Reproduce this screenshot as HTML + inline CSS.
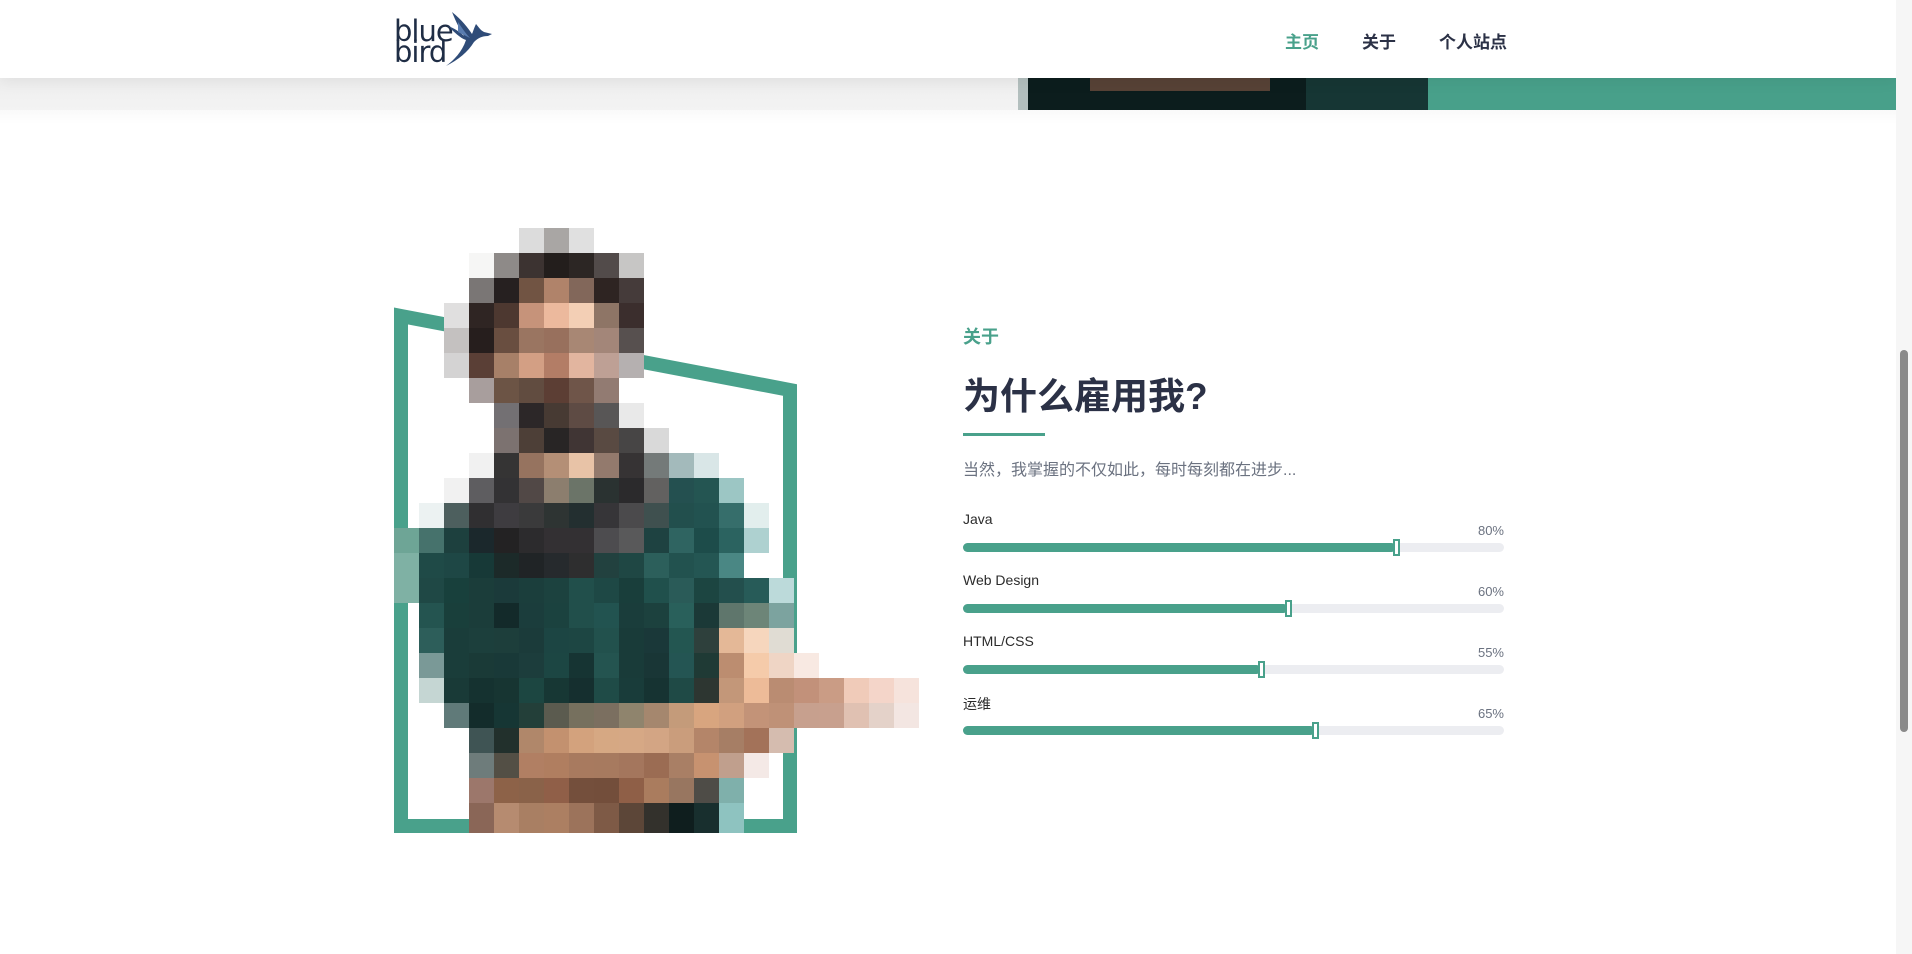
<!DOCTYPE html>
<html><head><meta charset="utf-8">
<style>
*{margin:0;padding:0;box-sizing:border-box}
html,body{width:1912px;height:954px;overflow:hidden;background:#fff;font-family:"Liberation Sans","Noto Sans CJK SC",sans-serif}
.abs{position:absolute}
.nav{font-size:17px;font-weight:600;color:#2b3146;top:28px}
.lbl{font-size:14px;color:#2b2b2b;left:963px}
.pct{font-size:13px;color:#6b7280;right:408px}
.track{left:963px;width:541px;height:9px;border-radius:5px;background:#ecedf1}
.fill{left:0;top:0;height:9px;border-radius:5px;background:#49a18b}
.h{top:-4px;width:7px;height:17px;background:#fff;border:2px solid #49a18b;margin-left:-3px}
</style></head><body>
<div class="abs" style="left:0;top:78px;width:1018px;height:32px;background:linear-gradient(#eeeeee,#f3f3f3)"></div>
<div class="abs" style="left:0;top:110px;width:1896px;height:14px;background:linear-gradient(#f9f9f9,#fff)"></div>
<div class="abs" style="left:1018px;top:78px;width:10px;height:32px;background:#b3bfbe"></div>
<div class="abs" style="left:1028px;top:78px;width:278px;height:32px;background:#0c1d1d"></div>
<div class="abs" style="left:1090px;top:78px;width:180px;height:13px;background:#574236"></div>
<div class="abs" style="left:1306px;top:78px;width:122px;height:32px;background:#163634"></div>
<div class="abs" style="left:1428px;top:78px;width:468px;height:32px;background:#48a08a"></div>
<div class="abs" style="left:0;top:0;width:1896px;height:78px;background:#fff;box-shadow:0 4px 14px rgba(0,0,0,0.06)"></div>
<div class="abs" style="left:394px;top:21px;font-size:29px;line-height:21px;color:#1f2d45;letter-spacing:-1px;font-family:'DejaVu Sans',sans-serif">blue<br>bird</div>
<svg class="abs" style="left:440px;top:8px" width="56" height="62" viewBox="0 0 56 62">
<path d="M12 4 C16 14 20 22 24 28 C20 24 14 20 8 18 C14 24 20 30 26 32 C22 44 14 52 6 58 C18 52 28 44 34 34 C38 30 42 28 48 28 L52 26 L44 24 C40 22 38 18 36 16 C34 20 33 24 32 26 C28 20 22 12 12 4Z" fill="#2f4c78"/>
<path d="M18 14 C22 20 26 26 30 30 C26 28 22 26 18 24Z" fill="#5a7db0"/>
</svg>
<div class="abs nav" style="left:1285px;color:#49a18b">主页</div>
<div class="abs nav" style="left:1362px">关于</div>
<div class="abs nav" style="left:1439px">个人站点</div>
<div class="abs" style="left:1896px;top:0;width:16px;height:954px;background:#f6f6f6"></div>
<div class="abs" style="left:1900px;top:350px;width:8px;height:382px;border-radius:4px;background:#8a8a8a"></div>
<svg class="abs" style="left:0;top:0" width="1912" height="954">
<polygon points="401,316 790,390 790,826 401,826" fill="none" stroke="#49a18b" stroke-width="14"/>
<g id="px"></g>
</svg>
<div class="abs" style="left:963px;top:323px;font-size:18px;font-weight:700;color:#49a18b">关于</div>
<div class="abs" style="left:963px;top:366px;font-size:37px;font-weight:700;color:#2b3146">为什么雇用我?</div>
<div class="abs" style="left:963px;top:433px;width:82px;height:3px;background:#49a18b"></div>
<div class="abs" style="left:963px;top:456px;font-size:16px;color:#6b7280">当然，我掌握的不仅如此，每时每刻都在进步...</div>

<div class="abs lbl" style="top:511px">Java</div>
<div class="abs pct" style="top:523px">80%</div>
<div class="abs track" style="top:543px"><div class="abs fill" style="width:80%"></div><div class="abs h" style="left:80%"></div></div>

<div class="abs lbl" style="top:572px">Web Design</div>
<div class="abs pct" style="top:584px">60%</div>
<div class="abs track" style="top:604px"><div class="abs fill" style="width:60%"></div><div class="abs h" style="left:60%"></div></div>

<div class="abs lbl" style="top:633px">HTML/CSS</div>
<div class="abs pct" style="top:645px">55%</div>
<div class="abs track" style="top:665px"><div class="abs fill" style="width:55%"></div><div class="abs h" style="left:55%"></div></div>

<div class="abs lbl" style="top:694px">运维</div>
<div class="abs pct" style="top:706px">65%</div>
<div class="abs track" style="top:726px"><div class="abs fill" style="width:65%"></div><div class="abs h" style="left:65%"></div></div>

<script>
var R=[
"5:dcdcdc,a9a6a4,e0e0e0",
"3:f6f6f5,8e8a88,3c3331,231e1c,2c2624,524b4a,c7c6c5",
"3:7a7675,262020,715443,b0836a,82675a,2e2422,453b3a",
"2:e0dfdf,2f2523,4d3830,c6937a,ecb99d,f3cfb5,8e7566,3b2e2d",
"2:c4c1c0,261e1d,694e40,9a7561,98705d,a88774,a38679,57504f",
"2:d4d3d3,5a3f36,a78068,d39f84,b37d66,e2b59f,bea095,b5b0b0",
"3:a89e9d,6c5445,614c40,5c3e34,6f5549,927b72",
"4:737073,2c2728,473a33,5e4b44,585656,e9e9e9",
"4:7c7270,4d3f37,282525,403534,594a42,474545,d9d9d9",
"3:f1f1f1,353434,96735f,b48f76,e8c3a7,937a6d,363334,747a79,a3babb,d9e6e7",
"2:f1f1f1,5e5d60,333234,514846,8c7e6e,6b7468,2a3231,2b2a2c,626160,245050,245552,9cc6c4",
"1:ecf2f2,4d5f5e,302f31,3e3c40,3a3a3b,2e3433,232f30,363538,4b4a4c,3f504f,224f4d,225250,366e6b,e2eeed",
"0:6ea596,46726c,1d403e,1b282c,232223,2c2b2d,333033,333033,4d4c4f,59595a,1e4241,2f6461,1d4c4a,2b6360,aed1d0",
"0:7fb1a4,1f4a47,1e4745,173937,1c2a29,202426,262a2d,2e2e2f,22413f,1f4744,2c5f5b,22524f,245653,4a8784",
"0:7fb1a4,1f4845,18403c,1b3d3a,1b3a3a,1b3e3c,1c423f,214f4b,1e4845,193e3b,20504c,2a5b58,1c4541,234f4d,275b58,bcdada",
"1:245450,193f3b,1b3d3a,132a2a,1b3d3c,1b423f,214f4b,225350,1a3d3b,1c413e,29605b,1b3937,5f766c,6d8578,7ca39f",
"1:2d5e5a,1a3d3a,1c3f3c,1d3e3b,1b3b3a,1c4543,1d4643,22514d,193b39,1a3839,235651,2e403c,e4b897,f6d6bd,e0dcd3",
"1:7a9997,1a3d3a,1a3a37,193938,1c3d3c,1c4643,163433,245450,193b39,193636,245553,1f3a35,bc8d70,f5cbaa,efd5c5,f8e9e2",
"1:c5d6d3,193a37,153230,173532,1c4641,173734,152f2f,1f4b47,193c3a,163332,1f4a46,2d3631,c39779,edbb98,ba8c72,c2917a,ca9c85,f0cbb9,f4d5c9,f6e3dc",
"2:607a79,132c2b,163634,233f39,5b5b4f,76705e,7b6f60,8f846d,a5876e,c49b7a,d8a57f,d1a07f,c39378,bf9177,c7a08e,c8a08e,e0c1b2,e4d2c9,f3e6e2",
"3:3f5454,22302c,b0876a,c3916f,d3a27d,d6a883,d6a885,d3a584,ca9d7c,b48569,a67e65,a37259,d5bcaf",
"3:6e7c7b,534f45,b17f63,b07e60,a87a5f,a77a5f,a4765d,9b6c53,a97f65,c79270,c09f8d,f4e9e6",
"3:9c776b,8d6248,8a6249,905f48,744f3c,734e3b,8f5f47,aa7c5e,987660,4e4c47,7fb0ab",
"3:8a6657,b68b70,a97f63,ac7f62,9c735b,7e5a46,5c4638,33312c,0f1e1e,182f2e,8ec3c0"];
var s="";
R.forEach(function(row,r){var p=row.split(":"),c0=+p[0],cs=p[1].split(",");
cs.forEach(function(c,i){var h=(r==23)?30:25;s+='<rect x="'+(394+(c0+i)*25)+'" y="'+(228+r*25)+'" width="25" height="'+h+'" fill="#'+c+'"/>';});});
document.getElementById("px").innerHTML=s;
</script>
</body></html>
